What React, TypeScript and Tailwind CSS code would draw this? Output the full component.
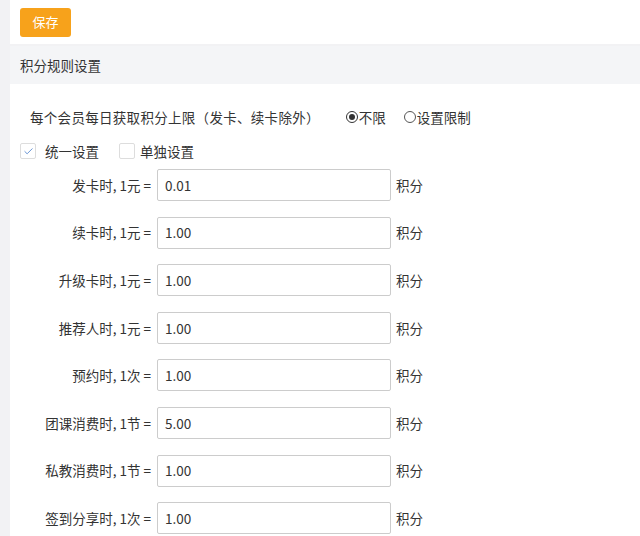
import { Check } from "lucide-react";

const rows = [
  ["发卡时, 1元 =", "0.01"],
  ["续卡时, 1元 =", "1.00"],
  ["升级卡时, 1元 =", "1.00"],
  ["推荐人时, 1元 =", "1.00"],
  ["预约时, 1次 =", "1.00"],
  ["团课消费时, 1节 =", "5.00"],
  ["私教消费时, 1节 =", "1.00"],
  ["签到分享时, 1次 =", "1.00"],
];

export default function App() {
  return (
    <div
      className="w-[640px] h-[536px] overflow-hidden bg-[#f2f2f4] pl-[10px] text-[13.5px] text-[#333]"
      style={{ fontFamily: '"Microsoft YaHei", "Noto Sans CJK SC", sans-serif' }}
    >
      <div className="h-[44px] bg-white flex items-center pl-[10px]">
        <button className="h-[29px] w-[51px] rounded-[3px] bg-[#f7a21b] text-white text-[13px]">保存</button>
      </div>
      <div className="h-[38px] mt-[2px] bg-[#f4f5f7] flex items-center pl-[10px] text-[#333]">积分规则设置</div>
      <div className="bg-white h-full pt-[22px] pl-[10px]">
        <div className="flex items-center h-[22px] pl-[10px]">
          <span className="tracking-[0.3px]">每个会员每日获取积分上限（发卡、续卡除外）</span>
          <span className="ml-[26px] flex items-center">
            <span className="w-[12px] h-[12px] rounded-full border border-[#333] flex items-center justify-center mr-[1px]">
              <span className="w-[6px] h-[6px] rounded-full bg-[#333]" />
            </span>
            不限
          </span>
          <span className="ml-[18px] flex items-center">
            <span className="w-[12px] h-[12px] rounded-full border border-[#555] mr-[1px]" />
            设置限制
          </span>
        </div>
        <div className="flex items-center h-[22px] mt-[12px]">
          <span className="w-[16px] h-[16px] border border-[#ddd] rounded-[2px] flex items-center justify-center mr-[9px]">
            <Check className="w-[11px] h-[11px] text-[#5b8bd0]" strokeWidth={2} />
          </span>
          <span>统一设置</span>
          <span className="w-[16px] h-[16px] border border-[#ddd] rounded-[2px] ml-[20px] mr-[5px]" />
          <span>单独设置</span>
        </div>
        <div className="flex flex-col gap-[15.6px] mt-[7px]">
          {rows.map(([label, value]) => (
            <div key={label} className="flex items-center h-[32px]">
              <span className="w-[137px] text-right pr-[6px] whitespace-nowrap">{label}</span>
              <div className="w-[234px] h-[32px] border border-[#ccc] rounded-[2px] flex items-center pl-[7px]">{value}</div>
              <span className="ml-[5px]">积分</span>
            </div>
          ))}
        </div>
      </div>
    </div>
  );
}
